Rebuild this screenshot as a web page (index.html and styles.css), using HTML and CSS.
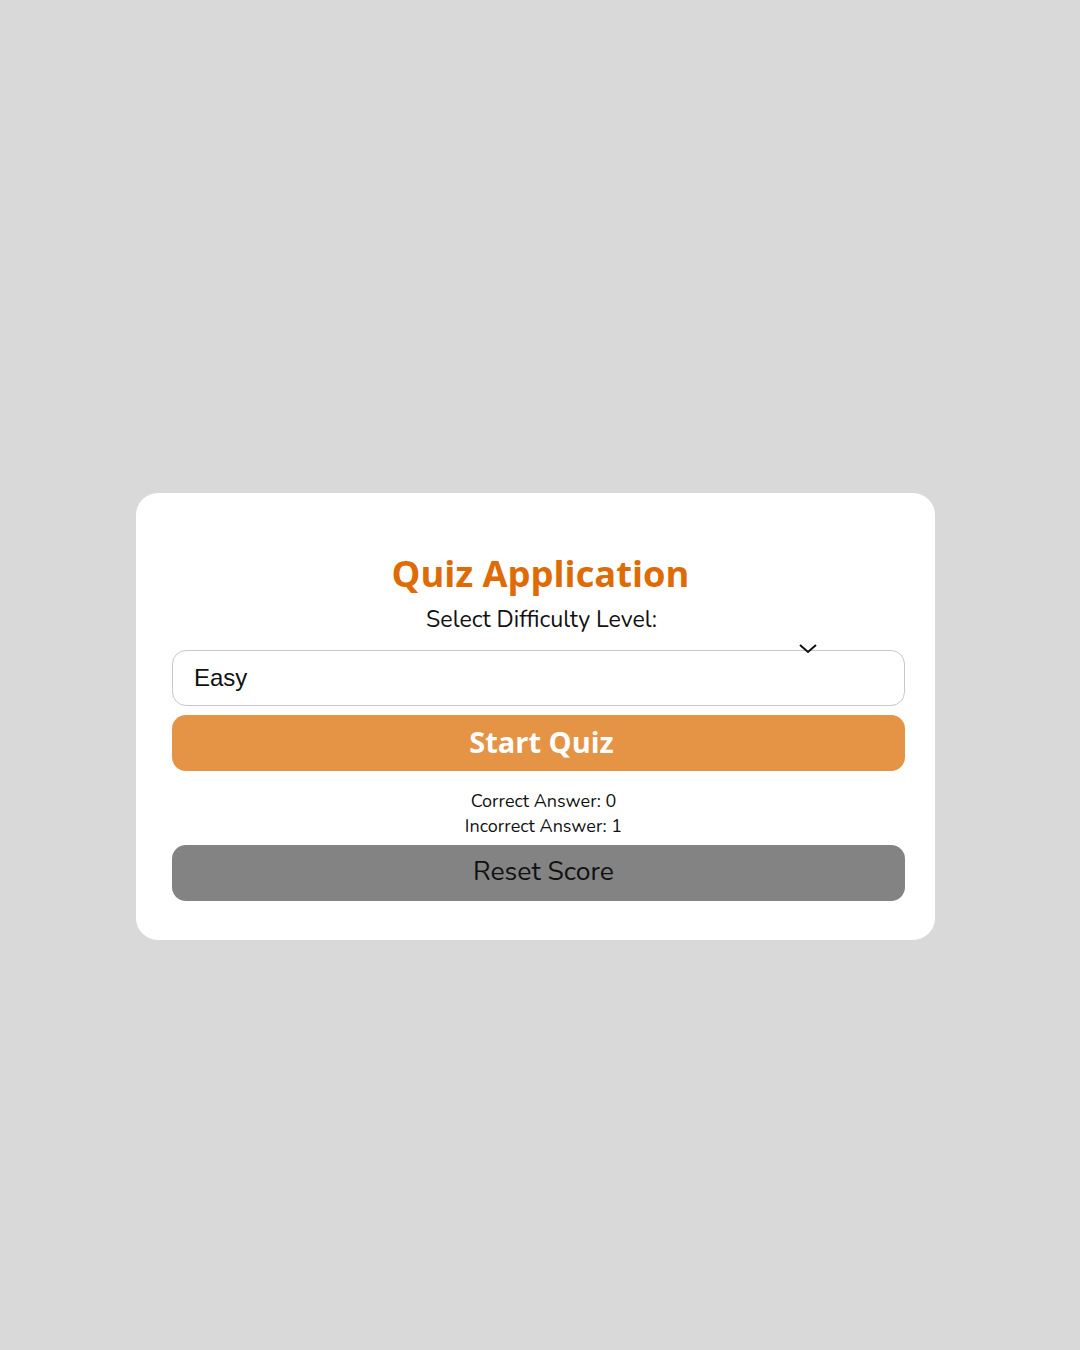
FILE: index.html
```html
<!DOCTYPE html>
<html>
<head>
<meta charset="utf-8">
<link rel="stylesheet" href="styles.css">
</head>
<body>
<div class="card">
  <h1 class="title">Quiz Application</h1>
  <div class="label">Select Difficulty Level:</div>
  <div class="select-wrap">
    <div class="select">Easy</div>
    <svg class="chevron" width="20" height="12" viewBox="0 0 20 12"><path d="M2 2 L10 9 L18 2" fill="none" stroke="#111" stroke-width="2"/></svg>
  </div>
  <button class="btn start">Start Quiz</button>
  <div class="score">
    <div>Correct Answer: 0</div>
    <div>Incorrect Answer: 1</div>
  </div>
  <button class="btn reset">Reset Score</button>
</div>
</body>
</html>
```
FILE: styles.css
```css
html, body {
  margin: 0;
  padding: 0;
  background: #d9d9d9;
}
body {
  width: 1080px;
  height: 1350px;
  padding-top: 493px;
  box-sizing: border-box;
}
.card {
  width: 799px;
  margin-left: 136px;
  background: #fff;
  border-radius: 22px;
  padding: 58px 30px 39px 36px;
  box-sizing: border-box;
  display: flex;
  flex-direction: column;
  align-items: stretch;
}
.title {
  margin: 0;
  font-family: "Open Sans", sans-serif;
  font-weight: 700;
  font-size: 36.3px;
  line-height: 44px;
  color: #de6b05;
  text-align: center;
  padding-left: 4px;
}
.label {
  font-family: "Nunito", "Lato", sans-serif;
  font-size: 23.2px;
  line-height: 30px;
  text-align: center;
  color: #111;
  margin-top: 10px;
  padding-left: 6px;
}
.select-wrap {
  position: relative;
  margin-top: 15px;
}
.select {
  height: 56px;
  border: 1px solid #c8c8c8;
  border-radius: 14px;
  box-sizing: border-box;
  font-family: "Liberation Sans", Arial, sans-serif;
  font-size: 24px;
  line-height: 54px;
  padding-left: 21px;
  color: #111;
}
.chevron {
  position: absolute;
  left: 626px;
  top: -7px;
}
.btn {
  display: block;
  width: 100%;
  height: 56px;
  border: none;
  border-radius: 14px;
  padding: 0;
}
.start {
  margin-top: 9px;
  background: #e59345;
  color: #fff;
  font-family: "Open Sans", sans-serif;
  font-weight: 700;
  font-size: 29px;
  padding-left: 6px;
  padding-bottom: 3px;
}
.score {
  margin-top: 18px;
  text-align: center;
  font-family: "Nunito", "Lato", sans-serif;
  font-size: 18px;
  line-height: 25px;
  color: #111;
  padding-left: 10px;
}
.reset {
  margin-top: 6px;
  background: #838383;
  color: #111;
  font-family: "Nunito", "Lato", sans-serif;
  font-size: 26.5px;
  padding-left: 10px;
  padding-bottom: 5px;
}
```
